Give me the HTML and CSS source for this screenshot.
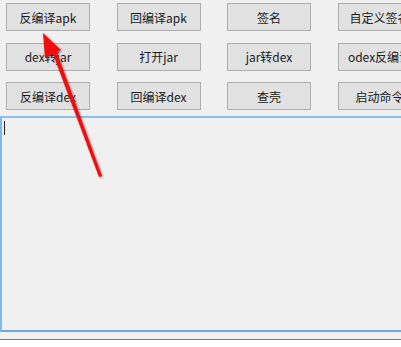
FILE: index.html
```html
<!DOCTYPE html>
<html lang="zh-CN">
<head>
<meta charset="UTF-8" />
<meta name="viewport" content="width=device-width, initial-scale=1" />
<title>APK工具</title>
<link rel="stylesheet" href="styles.css">
</head>
<body>
<div class="window">
  <div class="toolbar">
    <button class="btn">反编译apk</button>
    <button class="btn">回编译apk</button>
    <button class="btn">签名</button>
    <button class="btn">自定义签名</button>
    <button class="btn">dex转jar</button>
    <button class="btn">打开jar</button>
    <button class="btn">jar转dex</button>
    <button class="btn">odex反编译</button>
    <button class="btn">反编译dex</button>
    <button class="btn">回编译dex</button>
    <button class="btn">查壳</button>
    <button class="btn">启动命令</button>
  </div>
  <div class="output"><span class="caret"></span></div>
</div>

<!-- annotation arrow -->
<svg class="arrow" width="401" height="347" viewBox="0 0 401 347">
  <defs>
    <filter id="shadow" x="-50%" y="-50%" width="200%" height="200%">
      <feDropShadow dx="1" dy="1" stdDeviation="1.2" flood-color="#000" flood-opacity="0.45" />
    </filter>
  </defs>
  <g filter="url(#shadow)" fill="#f00f0f" stroke="none">
    <path d="M51.5 50 L99 177 L102 176 L55.5 48.5 Z" />
    <path d="M43 33 L45 58 L61 50 Z" />
  </g>
</svg>
</body>
</html>
```

FILE: styles.css
```css
html, body {
  margin: 0;
  padding: 0;
  width: 401px;
  height: 347px;
  overflow: hidden;
  background: #fff;
}
body {
  position: relative;
  font-family: "Noto Sans CJK SC", "Noto Sans", sans-serif;
  font-size: 12px;
}
.window {
  height: 339px;
  background: #f0f0f0;
  border-bottom: 1px solid #3d8fdb;
  overflow: hidden;
}
.toolbar {
  display: grid;
  grid-template-columns: repeat(4, 84px);
  grid-auto-rows: 28px;
  column-gap: 26.5px;
  row-gap: 11.5px;
  padding: 3px 0 0 6px;
  width: 460px;
}
.btn {
  margin: 0;
  padding: 0;
  background: #e1e1e1;
  border: 1px solid #adadad;
  font-family: inherit;
  font-size: 12px;
  color: #1a1a1a;
  white-space: nowrap;
  overflow: hidden;
  display: flex;
  justify-content: center;
  align-items: center;
}
.output {
  margin-top: 5.5px;
  width: 430px;
  height: 209px;
  background: #f0f0f0;
  border-top: 2px solid #8cc1ee;
  border-left: 2px solid #7db8ef;
  border-bottom: 2px solid #6aa9e6;
  padding: 3px 0 0 2px;
  box-sizing: content-box;
}
.caret {
  display: block;
  width: 1px;
  height: 14px;
  background: #222;
}
.arrow {
  position: absolute;
  left: 0;
  top: 0;
  pointer-events: none;
}
```
